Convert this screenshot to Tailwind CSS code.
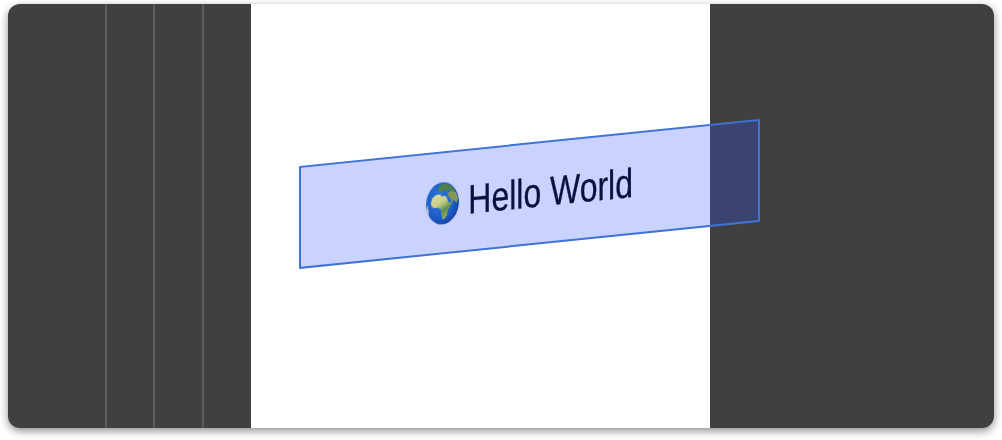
<!DOCTYPE html>
<html lang="en">
<head>
    <meta charset="UTF-8">
    <title>Hello World</title>
    <script src="https://cdn.jsdelivr.net/npm/@tailwindcss/browser@4"></script>
</head>
<body class="bg-white overflow-hidden font-['Liberation_Sans',Arial,sans-serif]">
    <div class="pt-1 pl-2 w-[1002px] h-[440px]">
        <!-- Card with the columns behind the box -->
        <div class="relative flex w-[986px] h-[424px] rounded-xl bg-[#404040] shadow-[0_3px_8px_rgba(0,0,0,0.45)]">
            <div class="w-[99px] border-r-2 border-[#5c5c5c]"></div>
            <div class="w-[48px] border-r-2 border-[#5c5c5c]"></div>
            <div class="w-[49px] border-r-2 border-[#5c5c5c]"></div>
            <div class="w-[47px]"></div>
            <div class="w-[459px] bg-white"></div>
            <div class="flex-1"></div>

            <!-- Skewed selection box -->
            <div class="absolute left-[290.5px] top-[162px] w-[461px] h-[103px] origin-top-left [transform:skewY(-5.84deg)] flex items-center justify-center rounded-[1px] border-2 border-[#3f74d4] bg-[#2c4cff]/25">
                <div class="flex items-center gap-[12px] scale-x-[0.78] text-[41px] leading-none text-[#0b1040] [-webkit-text-stroke:0.3px_#0b1040] whitespace-nowrap">
                    <svg class="blur-[0.4px]" width="42" height="42" viewBox="0 0 42 42">
                        <defs>
                            <radialGradient id="sea" cx="0.42" cy="0.4" r="0.65">
                                <stop offset="0" stop-color="#2f7ede"/>
                                <stop offset="0.7" stop-color="#1c5ac6"/>
                                <stop offset="1" stop-color="#143f9c"/>
                            </radialGradient>
                            <linearGradient id="land" x1="0" y1="0" x2="0.5" y2="1">
                                <stop offset="0" stop-color="#e2dca0"/>
                                <stop offset="0.45" stop-color="#c9cf8a"/>
                                <stop offset="0.75" stop-color="#5f8f4e"/>
                                <stop offset="1" stop-color="#93a866"/>
                            </linearGradient>
                        </defs>
                        <circle cx="21" cy="21" r="21" fill="url(#sea)"/>
                        <!-- Europe -->
                        <path d="M15 7 17 3 23 1 30 3 36 8 33 10 30 8 27 10 24 8 20 9 17 10Z" fill="#4f7f4c"/>
                        <!-- Africa -->
                        <path d="M6 20 8 15 13 12 18 12 20 14 25 14 27 17 29 21 34 20 31 25 28 28 27 33 23 37 21 37 19.500 32 19 27 15 25 10 25 7 23Z" fill="url(#land)"/>
                        <!-- Arabia and Asia -->
                        <path d="M27 12 32 9 38 11 41 17 39 22 36 19 33 20 30 16Z" fill="#84985a"/>
                        <path d="M30 4 35 6 38 11 33 9Z" fill="#4c7c50"/>
                        <path d="M1 28 1.500 21 3 26 3.500 32Z" fill="#e8e6c4" opacity="0.8"/>
                    </svg>
                    <span>Hello World</span>
                </div>
            </div>
        </div>
    </div>
</body>
</html>
